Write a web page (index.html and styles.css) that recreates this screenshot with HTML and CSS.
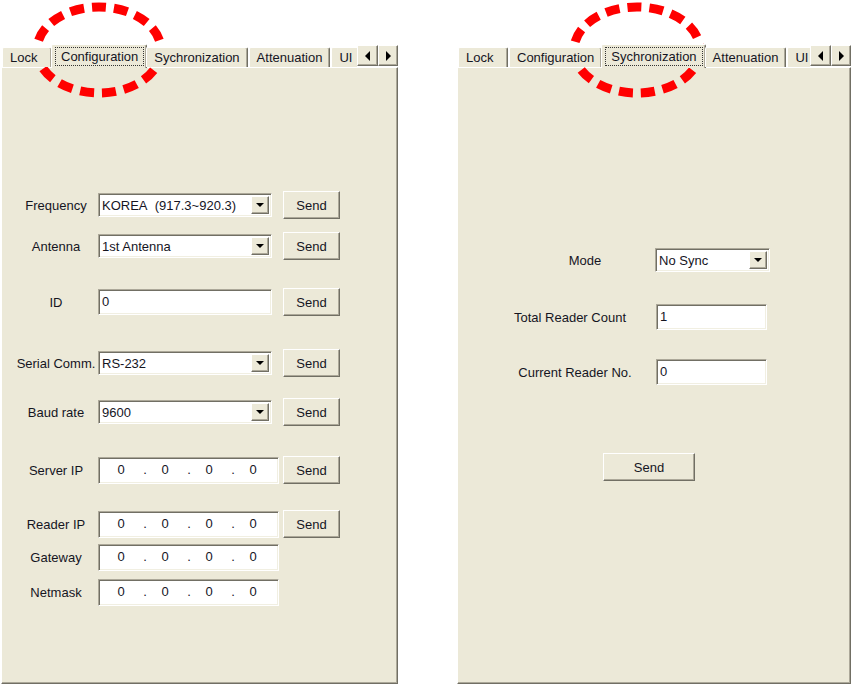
FILE: index.html
```html
<!DOCTYPE html>
<html lang="en">
<head>
    <meta charset="UTF-8">
    <meta name="viewport" content="width=device-width, initial-scale=1.0">
    <title>Reader Settings</title>
    <link rel="stylesheet" href="styles.css">
</head>
<body>
    <div class="screens">
        <div class="window window-left">
            <div class="tabstrip">
                <div class="tabs">
                    <div class="tab tab-lock">Lock</div>
                    <div class="tab active"><span class="focus">Configuration</span></div>
                    <div class="tab">Sychronization</div>
                    <div class="tab">Attenuation</div>
                    <div class="tab">UI</div>
                </div>
                <div class="scroller">
                    <div class="arrow raised"><span class="tri tri-left"></span></div>
                    <div class="arrow raised"><span class="tri tri-right"></span></div>
                </div>
            </div>
            <div class="panel">
                <div class="row row-freq">
                    <span class="label">Frequency</span>
                    <div class="select sunken"><span class="value">KOREA&nbsp; (917.3~920.3)</span><span class="drop raised"><span class="tri tri-down"></span></span></div>
                    <button class="btn raised">Send</button>
                </div>
                <div class="row row-antenna">
                    <span class="label">Antenna</span>
                    <div class="select sunken"><span class="value">1st Antenna</span><span class="drop raised"><span class="tri tri-down"></span></span></div>
                    <button class="btn raised">Send</button>
                </div>
                <div class="row row-id">
                    <span class="label">ID</span>
                    <div class="input sunken">0</div>
                    <button class="btn raised">Send</button>
                </div>
                <div class="row row-serial">
                    <span class="label">Serial Comm.</span>
                    <div class="select sunken"><span class="value">RS-232</span><span class="drop raised"><span class="tri tri-down"></span></span></div>
                    <button class="btn raised">Send</button>
                </div>
                <div class="row row-baud">
                    <span class="label">Baud rate</span>
                    <div class="select sunken"><span class="value">9600</span><span class="drop raised"><span class="tri tri-down"></span></span></div>
                    <button class="btn raised">Send</button>
                </div>
                <div class="row row-server">
                    <span class="label">Server IP</span>
                    <div class="ip sunken"><span class="oct">0</span><span class="dot">.</span><span class="oct">0</span><span class="dot">.</span><span class="oct">0</span><span class="dot">.</span><span class="oct">0</span></div>
                    <button class="btn raised">Send</button>
                </div>
                <div class="row row-reader">
                    <span class="label">Reader IP</span>
                    <div class="ip sunken"><span class="oct">0</span><span class="dot">.</span><span class="oct">0</span><span class="dot">.</span><span class="oct">0</span><span class="dot">.</span><span class="oct">0</span></div>
                    <button class="btn raised">Send</button>
                </div>
                <div class="row row-gateway">
                    <span class="label">Gateway</span>
                    <div class="ip sunken"><span class="oct">0</span><span class="dot">.</span><span class="oct">0</span><span class="dot">.</span><span class="oct">0</span><span class="dot">.</span><span class="oct">0</span></div>
                </div>
                <div class="row row-netmask">
                    <span class="label">Netmask</span>
                    <div class="ip sunken"><span class="oct">0</span><span class="dot">.</span><span class="oct">0</span><span class="dot">.</span><span class="oct">0</span><span class="dot">.</span><span class="oct">0</span></div>
                </div>
            </div>
        </div>

        <div class="window window-right">
            <div class="tabstrip">
                <div class="tabs">
                    <div class="tab tab-lock">Lock</div>
                    <div class="tab">Configuration</div>
                    <div class="tab active"><span class="focus">Sychronization</span></div>
                    <div class="tab">Attenuation</div>
                    <div class="tab">UI</div>
                </div>
                <div class="scroller">
                    <div class="arrow raised"><span class="tri tri-left"></span></div>
                    <div class="arrow raised"><span class="tri tri-right"></span></div>
                </div>
            </div>
            <div class="panel">
                <div class="sync-row row-mode">
                    <span class="label">Mode</span>
                    <div class="select select-mode sunken"><span class="value">No Sync</span><span class="drop raised"><span class="tri tri-down"></span></span></div>
                </div>
                <div class="sync-row row-total">
                    <span class="label">Total Reader Count</span>
                    <div class="input input-short sunken">1</div>
                </div>
                <div class="sync-row row-current">
                    <span class="label">Current Reader No.</span>
                    <div class="input input-short sunken">0</div>
                </div>
                <button class="btn btn-wide raised">Send</button>
            </div>
        </div>
    </div>

    <svg class="marks" width="851" height="687" viewBox="0 0 851 687">
        <ellipse cx="99" cy="50" rx="62" ry="43" fill="none" stroke="#ff0000" stroke-width="9" stroke-dasharray="14 8"/>
        <ellipse cx="637" cy="50" rx="63" ry="43" fill="none" stroke="#ff0000" stroke-width="9" stroke-dasharray="14 8"/>
    </svg>
</body>
</html>
```

FILE: styles.css
```css
body {
    margin: 0;
    background-color: #fff;
    font-family: "Liberation Sans", Arial, sans-serif;
    font-size: 13px;
    color: #15151f;
}

.screens {
    display: flex;
    align-items: flex-start;
    gap: 59px;
    padding: 44px 0 0 1px;
}

.window {
    display: flex;
    flex-direction: column;
}

.window-left {
    width: 397px;
}

.window-right {
    width: 394px;
}

/* tab header */
.tabstrip {
    display: flex;
    height: 24px;
    position: relative;
    z-index: 1;
}

.tabs {
    flex: 1;
    display: flex;
    align-items: flex-end;
    gap: 1px;
    overflow: hidden;
    padding-left: 1px;
}

.tab {
    flex-shrink: 0;
    box-sizing: border-box;
    height: 20px;
    margin-bottom: 1px;
    padding: 0 7px;
    line-height: 19px;
    background-color: #ece9d8;
    border-top: 1px solid #fff;
    border-left: 1px solid #fff;
    border-right: 1px solid #716f64;
    border-radius: 2px 2px 0 0;
    box-shadow: inset -1px 0 0 #aca899;
    white-space: nowrap;
}

.tab-lock {
    min-width: 50px;
}

.tab.active {
    height: 24px;
    margin: 0 -2px;
    padding: 2px 2px 0 3px;
    line-height: 17px;
}

.focus {
    display: block;
    height: 19px;
    box-sizing: border-box;
    padding: 0 5px;
    border: 1px dotted #333;
}

.scroller {
    display: flex;
    margin-top: 1px;
}

.arrow {
    box-sizing: border-box;
    width: 21px;
    height: 21px;
    display: flex;
    align-items: center;
    justify-content: center;
    background-color: #ece9d8;
}

.arrow + .arrow {
    width: 20px;
}

.tri {
    width: 0;
    height: 0;
    border-style: solid;
}

.tri-left {
    border-width: 5px 5px 5px 0;
    border-color: transparent #000 transparent transparent;
}

.tri-right {
    border-width: 5px 0 5px 5px;
    border-color: transparent transparent transparent #000;
}

.tri-down {
    border-width: 4px 4px 0 4px;
    border-color: #000 transparent transparent transparent;
}

/* 3d borders */
.raised {
    border-style: solid;
    border-width: 1px;
    border-color: #fff #716f64 #716f64 #fff;
    box-shadow: inset -1px -1px 0 #aca899;
}

.sunken {
    border-style: solid;
    border-width: 1px;
    border-color: #aca899 #fff #fff #aca899;
    box-shadow: inset 1px 1px 0 #716f64, inset -1px -1px 0 #f1efe2;
}

/* panel body */
.panel {
    box-sizing: border-box;
    height: 617px;
    margin-top: -1px;
    background-color: #ece9d8;
    border-top: 1px solid #fff;
    border-left: 1px solid #fff;
    border-right: 1px solid #716f64;
    border-bottom: 1px solid #716f64;
    box-shadow: inset -1px -1px 0 #aca899;
}

.row {
    display: grid;
    grid-template-columns: 84px 185px 57px;
    align-items: center;
    height: 28px;
    padding-left: 12px;
}

.row-freq { margin-top: 123px; }
.row-antenna { margin-top: 13px; }
.row-id { margin-top: 28px; }
.row-serial { margin-top: 33px; }
.row-baud { margin-top: 21px; }
.row-server { margin-top: 30px; }
.row-reader { margin-top: 26px; }
.row-gateway { margin-top: 5px; }
.row-netmask { margin-top: 7px; }

.label {
    text-align: center;
    white-space: nowrap;
}

.select {
    box-sizing: border-box;
    display: flex;
    align-items: stretch;
    width: 174px;
    height: 24px;
    padding: 2px;
    background-color: #fff;
}

.value {
    flex: 1;
    padding-left: 1px;
    line-height: 19px;
    white-space: nowrap;
    overflow: hidden;
}

.drop {
    box-sizing: border-box;
    width: 18px;
    display: flex;
    align-items: center;
    justify-content: center;
    background-color: #ece9d8;
}

.input {
    box-sizing: border-box;
    width: 174px;
    height: 26px;
    padding: 0 3px;
    line-height: 23px;
    background-color: #fff;
}

.ip {
    box-sizing: border-box;
    display: flex;
    width: 181px;
    height: 27px;
    padding-left: 7px;
    line-height: 24px;
    background-color: #fff;
}

.oct {
    width: 30px;
    text-align: center;
}

.dot {
    box-sizing: border-box;
    width: 14px;
    padding-left: 4px;
    text-align: center;
}

.btn {
    box-sizing: border-box;
    width: 57px;
    height: 28px;
    padding: 0;
    background-color: #ece9d8;
    font-family: inherit;
    font-size: 13px;
    color: #15151f;
    cursor: pointer;
}

/* synchronization tab */
.sync-row {
    display: grid;
    grid-template-columns: 140px auto;
    column-gap: 10px;
    align-items: center;
    height: 26px;
    padding-left: 47px;
}

.row-mode { margin-top: 179px; }
.row-total { margin-top: 31px; }
.row-current { margin-top: 29px; }

.row-mode .label { padding-left: 20px; }
.row-total .label { padding-right: 10px; }

.select-mode {
    width: 115px;
}

.input-short {
    width: 111px;
    margin-left: 1px;
}

.btn-wide {
    display: block;
    width: 92px;
    margin: 68px 0 0 145px;
}

/* red annotation marks */
.marks {
    position: absolute;
    top: 0;
    left: 0;
    pointer-events: none;
}
```
